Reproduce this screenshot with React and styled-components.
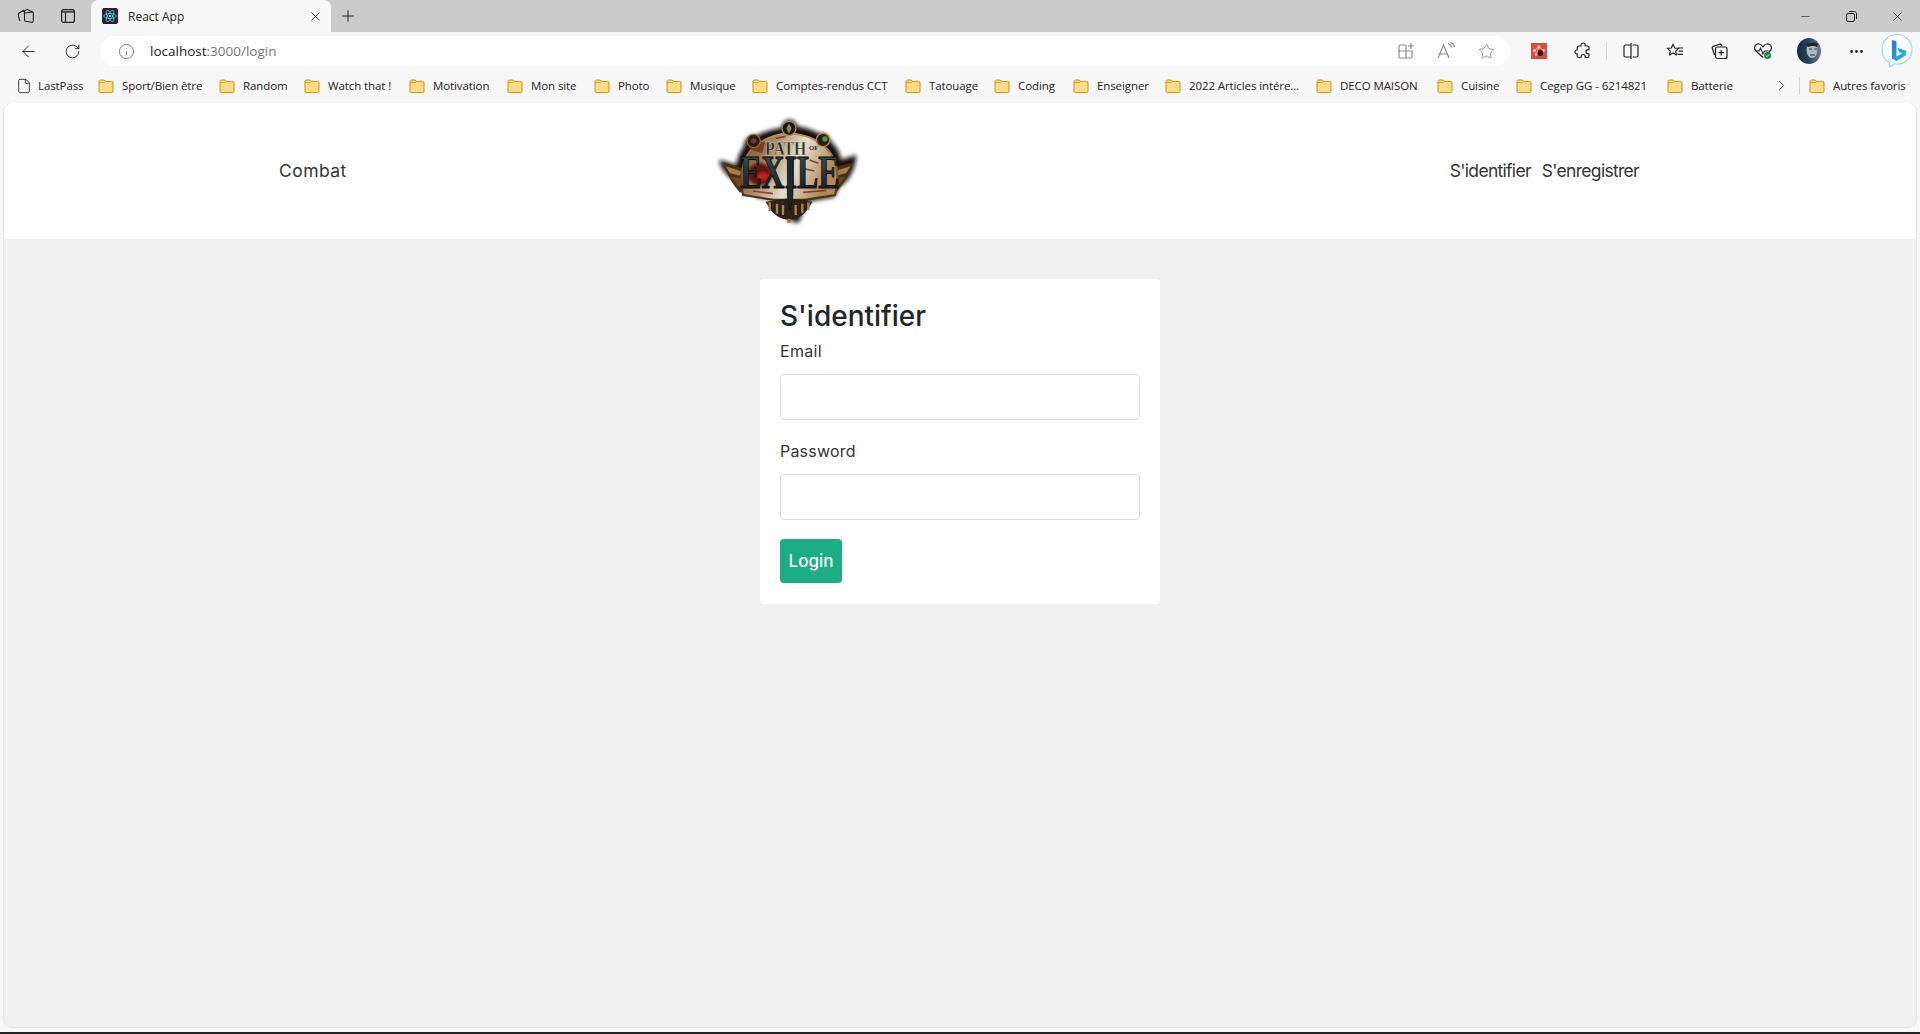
import React from 'react';
import styled, { createGlobalStyle } from 'styled-components';
import { ArrowLeft, RotateCw, Info, Star, Plus, X, Minus, ChevronRight, File, MoreHorizontal } from 'lucide-react';

const GlobalStyle = createGlobalStyle`
  * { box-sizing: border-box; }
  html, body { margin: 0; padding: 0; height: 100%; overflow: hidden; }
  body { font-family: "Inter", "Noto Sans", sans-serif; background: #f7f7f7; }
`;

const bookmarks = [
  { label: 'Sport/Bien être', width: 121 },
  { label: 'Random', width: 85 },
  { label: 'Watch that !', width: 105 },
  { label: 'Motivation', width: 98 },
  { label: 'Mon site', width: 87 },
  { label: 'Photo', width: 72 },
  { label: 'Musique', width: 86 },
  { label: 'Comptes-rendus CCT', width: 153 },
  { label: 'Tatouage', width: 89 },
  { label: 'Coding', width: 79 },
  { label: 'Enseigner', width: 92 },
  { label: '2022 Articles intére...', width: 151 },
  { label: 'DECO MAISON', width: 121 },
  { label: 'Cuisine', width: 79 },
  { label: 'Cegep GG - 6214821', width: 151 },
  { label: 'Batterie', width: 84 },
];

function Folder() {
  return (
    <svg width="16" height="16" viewBox="0 0 16 16">
      <path d="M1 3.500C1 2.700 1.600 2 2.500 2H6l1.600 1.400h6c.800 0 1.400.600 1.400 1.400v8.400c0 .800-.600 1.400-1.400 1.400H2.400c-.800 0-1.400-.600-1.400-1.400z" fill="#fcdc85" stroke="#c58f10" strokeWidth="1" />
      <path d="M1.200 4.600h5.200L7.600 3.400" fill="none" stroke="#c58f10" strokeWidth="0.800" />
    </svg>
  );
}

function ReactFavicon() {
  return (
    <svg width="16" height="16" viewBox="0 0 16 16">
      <rect width="16" height="16" rx="2" fill="#20262c" />
      <g fill="none" stroke="#5ac8e0" strokeWidth="0.800">
        <ellipse cx="8" cy="8" rx="6.400" ry="2.500" />
        <ellipse cx="8" cy="8" rx="6.400" ry="2.500" transform="rotate(60 8 8)" />
        <ellipse cx="8" cy="8" rx="6.400" ry="2.500" transform="rotate(120 8 8)" />
      </g>
      <circle cx="8" cy="8" r="1.300" fill="#5ac8e0" />
    </svg>
  );
}

function Workspaces() {
  return (
    <svg width="18" height="18" viewBox="0 0 18 18" fill="none" stroke="#222" strokeWidth="1.100">
      <path d="M6.500 4.500 9.500 2.600c.500-.300 1-.200 1.300.200L15.600 5c.500.200.800.700.700 1.200v7.500c0 1-.800 1.800-1.800 1.600l-6-1.100c-.600-.100-1-.600-1-1.200V6c0-.700 0-1.200 0-1.500z" fill="#cbcbcb" />
      <path d="M4.500 4.500 1.800 6.200c-.400.300-.600.700-.500 1.200l1 5.300c.100.500.500.800 1 .900" />
      <path d="M4.500 4.500 7 3" />
      <path d="M7.500 6l8.500-1" />
    </svg>
  );
}

function VerticalTabs() {
  return (
    <svg width="16" height="16" viewBox="0 0 16 16" fill="none" stroke="#222" strokeWidth="1.200">
      <rect x="1.600" y="1.600" width="12.800" height="12.800" rx="2" />
      <path d="M5.500 4.500v9.500" />
      <path d="M2 3.200h12v1.400H2z" fill="#222" stroke="none" />
    </svg>
  );
}

function AppAdd() {
  return (
    <svg width="18" height="18" viewBox="0 0 18 18" fill="none" stroke="#8b8b8b" strokeWidth="1.200">
      <path d="M9 3H3.500C2.700 3 2 3.700 2 4.500V15c0 .600.500 1 1 1h10.500c.800 0 1.500-.700 1.500-1.500V9H2" />
      <path d="M9 3v13M14 1v6M11 4h6" />
    </svg>
  );
}

function ReadAloud() {
  return (
    <svg width="20" height="20" viewBox="0 0 20 20" fill="none" stroke="#8b8b8b" strokeWidth="1.200">
      <path d="M2 17 7.500 4l5.500 13M4 13h7" />
      <path d="M12 2.500c1.800.600 3 2 3.500 4M14.500 1.200c2 .800 3.500 2.500 4 4.800" />
    </svg>
  );
}

function RedExtension() {
  return (
    <svg width="16" height="16" viewBox="0 0 16 16">
      <rect width="16" height="16" fill="#dc4c3e" />
      <circle cx="8" cy="4" r="1.700" fill="#f4c9c3" />
      <circle cx="3.500" cy="7.500" r="1.500" fill="#f4c9c3" />
      <circle cx="12.500" cy="7.500" r="1.500" fill="#f4c9c3" />
      <circle cx="5" cy="11.500" r="1.300" fill="#f4c9c3" />
      <path d="M3.500 7.500 8 4l4.500 3.500M5 11.500 8 4" stroke="#f4c9c3" strokeWidth="0.700" fill="none" />
      <ellipse cx="9.500" cy="10" rx="2.700" ry="3" fill="#2b1a17" />
    </svg>
  );
}

function PuzzleIcon() {
  return (
    <svg width="18" height="18" viewBox="0 0 18 18" fill="none" stroke="#222" strokeWidth="1.200" strokeLinejoin="round">
      <path d="M7 3.200C7 1.800 8 1 9.200 1s2.100.800 2.100 2.200V4h2.200c.800 0 1.500.700 1.500 1.500v2.200h-.700c-1.300 0-2.300.900-2.300 2.100s1 2.100 2.300 2.100h.700v2.100c0 .800-.700 1.500-1.500 1.500h-2.200v-.700c0-1.300-.900-2.300-2.100-2.300S7 13.500 7 14.800v.700H4.800c-.800 0-1.500-.700-1.500-1.500v-2.200h-.700C1.700 11.800 1 11 1 9.900s.700-1.900 1.600-1.900h.700V5.500C3.300 4.700 4 4 4.800 4H7z" />
    </svg>
  );
}

function SplitScreen() {
  return (
    <svg width="16" height="18" viewBox="0 0 16 18" fill="none" stroke="#222" strokeWidth="1.200">
      <path d="M8 3H2.500C1.700 3 1 3.700 1 4.500v9c0 .800.700 1.500 1.500 1.500H8" />
      <path d="M8 1v16" />
      <path d="M9.500 3h4c.800 0 1.500.700 1.500 1.500v9c0 .800-.700 1.500-1.500 1.500h-4" />
    </svg>
  );
}

function FavoritesIcon() {
  return (
    <svg width="18" height="18" viewBox="0 0 18 18" fill="none" stroke="#222" strokeWidth="1.200" strokeLinejoin="round">
      <path d="M7 2.200 8.700 6l3.900.400-2.900 2.700.800 3.900L7 11l-3.500 2 .800-3.900L1.400 6.400 5.300 6z" />
      <path d="M12 6h5M12.500 9.200H17M11.500 12.400H17" />
    </svg>
  );
}

function CollectionsIcon() {
  return (
    <svg width="18" height="18" viewBox="0 0 18 18" fill="none" stroke="#222" strokeWidth="1.200">
      <path d="M4.500 13 2.300 6.300c-.300-.800.100-1.600.900-1.900l6.500-2.200c.700-.200 1.500.100 1.800.800l.5 1" />
      <rect x="5.500" y="5" width="11.500" height="11.500" rx="2" />
      <path d="M11.200 8v5.500M8.500 10.700H14" />
    </svg>
  );
}

function HeartIcon() {
  return (
    <svg width="20" height="18" viewBox="0 0 20 18" fill="none">
      <path d="M10 15.500 3 9C1 7 1.200 4.200 3 2.800c1.900-1.400 4.800-1 6.200 1l.8 1 .8-1c1.400-2 4.300-2.400 6.200-1 1.800 1.400 2 4.200 0 6.200l-1.500 1.500" stroke="#222" strokeWidth="1.200" />
      <path d="M2.500 9h3.500l1.500-3 2.500 6 1.500-3h4" stroke="#222" strokeWidth="1.100" />
      <circle cx="14.500" cy="13.500" r="3.500" fill="#118a3c" />
      <path d="m12.900 13.500 1.200 1.200 2-2.200" stroke="#fff" strokeWidth="0.900" />
    </svg>
  );
}

function Avatar() {
  return (
    <svg width="24" height="26" viewBox="0 0 24 26">
      <defs>
        <linearGradient id="avatarBg" x1="0" y1="0" x2="1" y2="0">
          <stop offset="0" stopColor="#122a3f" />
          <stop offset="0.500" stopColor="#27465f" />
          <stop offset="1" stopColor="#6d7f8d" />
        </linearGradient>
        <filter id="avatarBlur"><feGaussianBlur stdDeviation="0.700" /></filter>
      </defs>
      <ellipse cx="12" cy="13" rx="12" ry="13" fill="url(#avatarBg)" />
      <g filter="url(#avatarBlur)">
        <ellipse cx="15" cy="12" rx="5.500" ry="8" fill="#aeb8bf" />
        <path d="M9 7c2-3 8-4 12-1l-1 3c-3-1.500-6-1.500-9 0z" fill="#1a2530" />
        <path d="M12 11h3M17.500 11h2.500M13 17h5" stroke="#28323c" strokeWidth="1" />
      </g>
    </svg>
  );
}

function BingIcon() {
  return (
    <svg width="34" height="38" viewBox="0 0 34 38">
      <defs>
        <linearGradient id="bingB" x1="0" y1="0" x2="1" y2="1">
          <stop offset="0" stopColor="#1d6fe0" />
          <stop offset="1" stopColor="#2cc3e8" />
        </linearGradient>
      </defs>
      <path d="M17 2.500C8.500 2.500 2 9 2 17.500c0 6 3 10.500 7.500 13V35l5-3.200c.800.100 1.700.200 2.500.200 8.500 0 15-6.500 15-14.500S25.500 2.500 17 2.500z" fill="#fff" stroke="#9fd4f2" strokeWidth="1.200" />
      <path d="M12 8l4.500 1.500v15l5.500-3-2.800-1.500-1.700-4.200 8.500 3v4.500L16.500 29 12 26.500z" fill="url(#bingB)" />
    </svg>
  );
}

function Logo() {
  return (
    <LogoSvg viewBox="0 0 510 390" aria-label="Path of Exile">
      <defs>
        <linearGradient id="plate" x1="0" y1="0" x2="1" y2="0.300">
          <stop offset="0" stopColor="#6a3f22" />
          <stop offset="0.350" stopColor="#a98a66" />
          <stop offset="0.650" stopColor="#e8dfcd" />
          <stop offset="1" stopColor="#b0895c" />
        </linearGradient>
        <linearGradient id="gold" x1="0" y1="0" x2="0" y2="1">
          <stop offset="0" stopColor="#b8975a" />
          <stop offset="1" stopColor="#4a2e14" />
        </linearGradient>
        <linearGradient id="steel" x1="0" y1="0" x2="0" y2="1">
          <stop offset="0" stopColor="#40565a" />
          <stop offset="1" stopColor="#0e171b" />
        </linearGradient>
        <filter id="soft" x="-10%" y="-10%" width="120%" height="120%"><feGaussianBlur stdDeviation="6" /></filter>
        <filter id="slight"><feGaussianBlur stdDeviation="1.200" /></filter>
        <filter id="blot"><feGaussianBlur stdDeviation="4" /></filter>
      </defs>
      <path filter="url(#soft)" fill="#14100c" d="M258 44c12 0 22 8 24 20 28 4 50 12 66 22 12-4 30 4 34 22 20 18 30 38 32 56l46-14c-2 42-24 82-52 96l-14 30-82 14-10 26-14 36h-20l-18-44-8-18-84-14-14-30C94 234 56 205 48 164l52 16c4-24 12-42 24-58-2-16 14-34 36-30 22-12 50-20 76-24 2-12 12-24 22-24z" />
      <g filter="url(#slight)">
        <path fill="#4a2f17" d="M60 172c30 8 50 14 60 20l18 76-28-6C90 238 72 212 60 172zM450 172c-30 8-50 14-60 20l-18 76 28-6c20-24 38-50 50-90z" />
        <path fill="#a67c4a" d="M68 184c20 6 36 10 46 16l-4 12-30-8zM442 184c-20 6-36 10-46 16l4 12 30-8z" />
        <path fill="#6f4520" d="M84 216l30 4 6 28-16-6zM426 216l-30 4-6 28 16-6z" />
        <path fill="url(#plate)" stroke="url(#gold)" strokeWidth="6" d="M120 270c-10-60-4-108 30-140 30-28 66-44 108-44s84 16 112 44c32 30 40 80 26 140l-90 14h-96z" />
        <ellipse cx="170" cy="208" rx="36" ry="34" fill="#5e170e" filter="url(#blot)" />
        <ellipse cx="180" cy="214" rx="18" ry="12" fill="#c8211c" filter="url(#blot)" />
        <path d="M140 130c14-10 30-16 44-18l-8 30zM300 190l34 8M320 165l26 10M150 258l60 8M300 262l70-6M218 100l30-6" stroke="#7d2a18" strokeWidth="5" fill="#7d2a18" opacity="0.800" />
        <path d="M188 290c20 40 40 50 70 56 30-6 50-16 70-56l-70-10z" fill="#2f2112" />
        <path d="M200 292v26M222 296v30M240 300v30M278 300v30M298 296v28M316 292v24" stroke="#a5845a" strokeWidth="7" />
        <circle cx="258" cy="348" r="7" fill="#a77b4a" />
        <circle cx="258" cy="70" r="21" fill="#1d1510" stroke="#a98a52" strokeWidth="4" />
        <path d="M258 56l8 14-8 16-8-16z" fill="#7d8f74" />
        <circle cx="152" cy="108" r="20" fill="#2a1b12" stroke="#8f6a3a" strokeWidth="4" />
        <circle cx="152" cy="108" r="8" fill="#6e3b22" />
        <circle cx="360" cy="105" r="20" fill="#2a1b12" stroke="#a98a52" strokeWidth="4" />
        <circle cx="366" cy="102" r="8" fill="#4f9a39" />
      </g>
      <LogoSmall x="186" y="150" textLength="124" lengthAdjust="spacingAndGlyphs">PATH</LogoSmall>
      <LogoOf x="318" y="136">OF</LogoOf>
      <LogoBig x="112" y="248" textLength="298" lengthAdjust="spacingAndGlyphs">EXILE</LogoBig>
      <path d="M250 156h22l-2 10v106l-9 44-8-44V166z" fill="#1c2a2e" stroke="#0c0a08" strokeWidth="2" />
    </LogoSvg>
  );
}

export default function App() {
  return (
    <Window>
      <GlobalStyle />
      <TabStrip>
        <StripButton $width={42}><Workspaces /></StripButton>
        <StripButton $width={42}><VerticalTabs /></StripButton>
        <Tab>
          <ReactFavicon />
          <TabTitle>React App</TabTitle>
          <TabClose><X size={15} strokeWidth={1.4} color="#222" /></TabClose>
        </Tab>
        <StripButton $width={34}><Plus size={18} strokeWidth={1.2} color="#111" /></StripButton>
        <WindowControls>
          <ControlButton><Minus size={13} strokeWidth={1.2} color="#222" /></ControlButton>
          <ControlButton>
            <svg width="11" height="11" viewBox="0 0 11 11" fill="none" stroke="#222" strokeWidth="1">
              <rect x="0.500" y="2.500" width="8" height="8" rx="1.500" />
              <path d="M3 .5h5.500c1 0 2 1 2 2V8" />
            </svg>
          </ControlButton>
          <ControlButton><X size={15} strokeWidth={1.2} color="#222" /></ControlButton>
        </WindowControls>
      </TabStrip>

      <Toolbar>
        <ToolSlot><ArrowLeft size={19} strokeWidth={1.2} color="#222" /></ToolSlot>
        <ToolSlot><RotateCw size={17} strokeWidth={1.3} color="#222" /></ToolSlot>
        <AddressPill>
          <Info size={17} strokeWidth={1.1} color="#555" />
          <UrlText>localhost<UrlMuted>:3000/login</UrlMuted></UrlText>
          <PillSlot><AppAdd /></PillSlot>
          <PillSlot><ReadAloud /></PillSlot>
          <PillSlot><Star size={17} strokeWidth={1.1} color="#777" /></PillSlot>
        </AddressPill>
        <ToolSlot><RedExtension /></ToolSlot>
        <ToolSlot><PuzzleIcon /></ToolSlot>
        <ToolDivider />
        <ToolSlot><SplitScreen /></ToolSlot>
        <ToolSlot><FavoritesIcon /></ToolSlot>
        <ToolSlot><CollectionsIcon /></ToolSlot>
        <ToolSlot><HeartIcon /></ToolSlot>
        <ToolSlot $width={48}><Avatar /></ToolSlot>
        <ToolSlot $width={47}><MoreHorizontal size={17} strokeWidth={2} color="#222" /></ToolSlot>
        <ToolSlot $width={34}><BingIcon /></ToolSlot>
      </Toolbar>

      <BookmarkBar>
        <BookmarkItem $width={82}>
          <File size={16} strokeWidth={1.2} color="#111" />
          <BookmarkLabel $gap={6}>LastPass</BookmarkLabel>
        </BookmarkItem>
        {bookmarks.map((b) => (
          <BookmarkItem key={b.label} $width={b.width}>
            <Folder />
            <BookmarkLabel>{b.label}</BookmarkLabel>
          </BookmarkItem>
        ))}
        <MoreBookmarks><ChevronRight size={17} strokeWidth={1.2} color="#222" /></MoreBookmarks>
        <BookmarkDivider />
        <BookmarkItem $width={100}>
          <Folder />
          <BookmarkLabel>Autres favoris</BookmarkLabel>
        </BookmarkItem>
      </BookmarkBar>

      <PageFrame>
        <NavBar>
          <NavLink $spacing={0.45}>Combat</NavLink>
          <LogoLink><Logo /></LogoLink>
          <NavRight>
            <NavLink $spacing={-0.7}>S'identifier</NavLink>
            <NavLink $spacing={-0.7}>S'enregistrer</NavLink>
          </NavRight>
        </NavBar>
        <Card>
          <Title>S'identifier</Title>
          <Field>
            <FieldLabel $spacing={0.3}>Email</FieldLabel>
            <TextInput type="email" />
          </Field>
          <Field>
            <FieldLabel $spacing={0.2}>Password</FieldLabel>
            <TextInput type="password" />
          </Field>
          <LoginButton>Login</LoginButton>
        </Card>
      </PageFrame>
      <TaskbarEdge />
    </Window>
  );
}

const Window = styled.div`
  display: flex;
  flex-direction: column;
  width: 1920px;
  height: 1034px;
  overflow: hidden;
  background: #f7f7f7;
`;

const TabStrip = styled.div`
  display: flex;
  align-items: center;
  flex: 0 0 32px;
  height: 32px;
  padding-left: 5px;
  background: #cbcbcb;
`;

const StripButton = styled.div`
  display: flex;
  align-items: center;
  justify-content: center;
  width: ${(p) => p.$width}px;
  height: 32px;
`;

const Tab = styled.div`
  display: flex;
  align-items: center;
  width: 240px;
  height: 32px;
  margin-left: 2px;
  padding: 0 8px 0 11px;
  background: #f7f7f7;
  border-radius: 7px 7px 0 0;
`;

const TabTitle = styled.span`
  flex: 1;
  margin-left: 10px;
  font-family: "Open Sans", sans-serif;
  font-size: 12px;
  color: #222;
`;

const TabClose = styled.span`
  display: flex;
`;

const WindowControls = styled.div`
  display: flex;
  margin-left: auto;
`;

const ControlButton = styled.div`
  display: flex;
  align-items: center;
  justify-content: center;
  width: 46px;
  height: 32px;
`;

const Toolbar = styled.div`
  display: flex;
  align-items: center;
  flex: 0 0 38px;
  padding: 0 2px 0 6px;
`;

const ToolSlot = styled.div`
  display: flex;
  flex: 0 0 ${(p) => p.$width || 44}px;
  align-items: center;
  justify-content: center;
  height: 30px;
`;

const AddressPill = styled.div`
  display: flex;
  align-items: center;
  flex: 0 0 1410px;
  height: 30px;
  margin: 0 7px 0 6px;
  padding: 0 4px 0 18px;
  background: #fff;
  border-radius: 15px;
`;

const UrlText = styled.span`
  flex: 1;
  margin-left: 15px;
  font-family: "Open Sans", sans-serif;
  font-size: 13.500px;
  color: #222;
`;

const UrlMuted = styled.span`
  color: #767676;
`;

const PillSlot = styled.span`
  display: flex;
  align-items: center;
  justify-content: center;
  width: 40px;
`;

const ToolDivider = styled.span`
  flex: 0 0 1px;
  height: 18px;
  margin: 0 2px 0 1px;
  background: #d4d4d4;
`;

const BookmarkBar = styled.div`
  display: flex;
  align-items: center;
  flex: 0 0 33px;
  padding: 0 0 2px 16px;
`;

const BookmarkItem = styled.div`
  display: flex;
  flex: 0 0 ${(p) => p.$width}px;
  align-items: center;
`;

const BookmarkLabel = styled.span`
  margin-left: ${(p) => p.$gap || 8}px;
  font-family: "Open Sans", sans-serif;
  font-size: 11.500px;
  letter-spacing: -0.100px;
  color: #222;
  white-space: nowrap;
`;

const MoreBookmarks = styled.span`
  display: flex;
  margin-left: 22px;
`;

const BookmarkDivider = styled.span`
  flex: 0 0 1px;
  height: 18px;
  margin: 0 9px;
  background: #d4d4d4;
`;

const PageFrame = styled.main`
  flex: 1;
  margin: 0 3px 4px;
  overflow: hidden;
  background: #f0f0f0;
  border: 1px solid #e2e2e2;
  border-top: 0;
  border-radius: 9px;
`;

const TaskbarEdge = styled.div`
  flex: 0 0 2px;
  background: #222;
`;

const NavBar = styled.nav`
  display: flex;
  align-items: center;
  height: 136px;
  padding: 0 0 2px 275px;
  background: #fff;
`;

const NavLink = styled.a`
  font-size: 17.500px;
  letter-spacing: ${(p) => p.$spacing}px;
  color: #333;
  cursor: pointer;
`;

const LogoLink = styled.a`
  display: flex;
  margin-left: 356px;
`;

const LogoSvg = styled.svg`
  display: block;
  width: 170px;
  height: 130px;
`;

const LogoSmall = styled.text`
  font-family: "Liberation Serif", serif;
  font-size: 58px;
  font-weight: 700;
  fill: #1d2b2f;
  stroke: #f0e6d0;
  stroke-width: 1;
`;

const LogoOf = styled.text`
  font-family: "Liberation Serif", serif;
  font-size: 20px;
  font-weight: 700;
  fill: #1d2b2f;
`;

const LogoBig = styled.text`
  font-family: "Liberation Serif", serif;
  font-size: 138px;
  font-weight: 700;
  fill: url(#steel);
  stroke: #0c0a08;
  stroke-width: 3;
`;

const NavRight = styled.div`
  display: flex;
  gap: 11px;
  margin-left: 577px;
`;

const Card = styled.section`
  width: 400px;
  height: 325px;
  margin: 40px auto 0;
  padding: 20px;
  background: #fff;
  border-radius: 4px;
`;

const Title = styled.h2`
  margin: 0 0 6px;
  font-size: 28px;
  font-weight: 500;
  line-height: 34px;
  color: #212529;
`;

const Field = styled.div`
  display: flex;
  flex-direction: column;
  margin-bottom: 19px;
`;

const FieldLabel = styled.label`
  margin-bottom: 11px;
  font-size: 16px;
  line-height: 24px;
  letter-spacing: ${(p) => p.$spacing}px;
  color: #333;
`;

const TextInput = styled.input`
  width: 100%;
  height: 46px;
  background: #fff;
  border: 1px solid #dcdcdc;
  border-radius: 4px;
`;

const LoginButton = styled.button`
  display: block;
  width: 62px;
  height: 44px;
  margin-top: 1px;
  padding: 0;
  font-family: inherit;
  font-size: 17px;
  font-weight: 500;
  color: #fff;
  background: #1bae82;
  border: 0;
  border-radius: 4px;
`;
